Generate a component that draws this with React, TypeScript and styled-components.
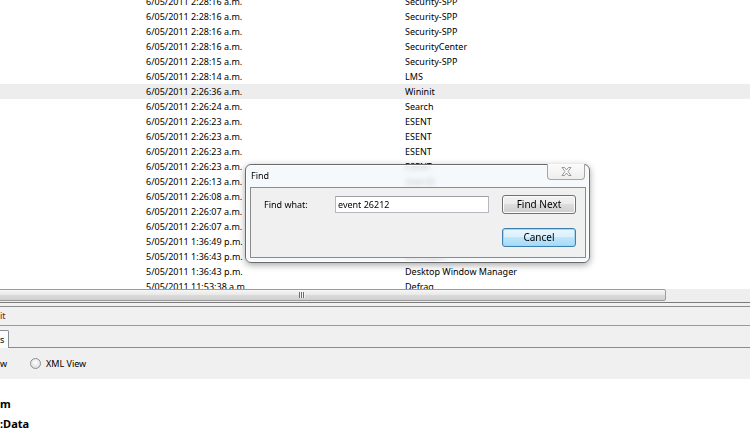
import React from "react";
import styled, { createGlobalStyle } from "styled-components";

// --- 전역 스타일 ---
const GlobalStyle = createGlobalStyle`
  html, body {
    margin: 0;
    padding: 0;
    overflow: hidden;
    background: #fff;
  }
  body {
    font-family: "Noto Sans", "Open Sans", sans-serif;
    font-size: 9px;
    color: #000;
  }
`;

// --- 이벤트 목록 ---
const Page = styled.div`
  position: relative;
  width: 750px;
  height: 429px;
  overflow: hidden;
  display: flex;
  flex-direction: column;
`;

const ListPane = styled.div`
  height: 289px;
  flex: none;
  overflow: hidden;
  background: #fff;
`;

const ListBody = styled.div`
  margin-top: -6px;
`;

const Row = styled.div<{ $selected?: boolean }>`
  display: flex;
  height: 15px;
  line-height: 15px;
  padding-left: 146px;
  background: ${(p) => (p.$selected ? "#ededed" : "transparent")};
  white-space: nowrap;
`;

const DateCell = styled.span`
  width: 259px;
  flex: none;
`;

const SourceCell = styled.span``;

// 가로 스크롤바
const HScroll = styled.div`
  height: 13px;
  flex: none;
  display: flex;
  background: #eeeeee;
`;

const Thumb = styled.div`
  width: 668px;
  margin-left: -2px;
  height: 12px;
  box-sizing: border-box;
  border: 1px solid #9b9b9b;
  border-radius: 2px;
  background: linear-gradient(#f6f6f6 0%, #e9e9e9 45%, #dadada 55%, #d0d0d0 100%);
  display: flex;
  align-items: center;
  justify-content: center;
  padding-right: 60px;
`;

const Grip = styled.div`
  width: 6px;
  height: 6px;
  background: repeating-linear-gradient(
    90deg,
    #6d6d6d 0px,
    #6d6d6d 1px,
    #f4f4f4 1px,
    #f4f4f4 2px
  );
`;

// 분할선 및 하단 패널
const Splitter = styled.div`
  height: 5px;
  flex: none;
  box-sizing: border-box;
  border-top: 1px solid #7c7c7c;
  border-bottom: 1px solid #8c8c8c;
  background: #f0f0f0;
`;

const HeaderBar = styled.div`
  height: 19px;
  flex: none;
  box-sizing: border-box;
  border-bottom: 1px solid #9a9a9a;
  background: #f0f0f0;
  color: #6b1a1a;
  line-height: 18px;
`;

const TabStrip = styled.div`
  height: 22px;
  flex: none;
  display: flex;
  align-items: flex-end;
  background: #f0f0f0;
`;

const Tab = styled.div`
  width: 9px;
  height: 18px;
  box-sizing: border-box;
  border-right: 1px solid #898c95;
  border-top: 1px solid #898c95;
  border-top-right-radius: 2px;
  background: #fcfcfc;
  line-height: 17px;
  overflow: hidden;
`;

const TabFill = styled.div`
  flex: 1;
  height: 1px;
  background: #898c95;
`;

const RadioRow = styled.div`
  height: 31px;
  flex: none;
  display: flex;
  align-items: center;
  background: #f0f0f0;
`;

const RadioLabel = styled.span<{ $w?: number }>`
  width: ${(p) => (p.$w ? `${p.$w}px` : "auto")};
  display: inline-block;
`;

const Radio = styled.span`
  width: 11px;
  height: 11px;
  box-sizing: border-box;
  border-radius: 50%;
  border: 1px solid #8f8f8f;
  background: radial-gradient(circle at 50% 40%, #ffffff 0%, #e6e6e6 60%, #cfcfcf 100%);
  margin-right: 5px;
`;

const DetailArea = styled.div`
  flex: 1;
  background: #fff;
  padding-top: 15px;
`;

const BoldLine = styled.div`
  font-weight: 700;
  font-size: 11px;
  line-height: 20px;
`;

// --- 찾기 대화상자 ---
const Dialog = styled.div`
  position: absolute;
  left: 245px;
  top: 164px;
  width: 345px;
  height: 99px;
  box-sizing: border-box;
  border: 1px solid #6a6a6a;
  border-radius: 6px;
  padding: 22px 3px 4px 4px;
  background: rgba(244, 247, 251, 0.78);
  backdrop-filter: blur(2.5px);
  box-shadow: 0 2px 7px rgba(0, 0, 0, 0.35), inset 0 0 0 1px rgba(255, 255, 255, 0.85);
`;

const Title = styled.div`
  position: absolute;
  left: 5px;
  top: 4px;
  line-height: 14px;
`;

const CloseButton = styled.div`
  position: absolute;
  right: 4px;
  top: -1px;
  width: 38px;
  height: 16px;
  box-sizing: border-box;
  border: 1px solid #a6a6a6;
  border-top: none;
  border-radius: 0 0 4px 4px;
  background: linear-gradient(#fbfbfb, #eeeeee);
  display: flex;
  align-items: center;
  justify-content: center;
`;

const Panel = styled.div`
  height: 71px;
  box-sizing: border-box;
  border: 1px solid #8b8b8b;
  background: #f0f0f0;
  padding: 7px 0 0 13px;
  display: grid;
  grid-template-columns: 58px 154px 74px;
  grid-template-rows: 19px 19px;
  column-gap: 13px;
  row-gap: 14px;
  align-items: center;
`;

const FieldLabel = styled.span`
  line-height: 19px;
`;

const TextBox = styled.div`
  height: 17px;
  box-sizing: border-box;
  border: 1px solid #b5b8be;
  border-top-color: #9ea1a7;
  background: #fff;
  padding-left: 2px;
  line-height: 15px;
`;

const Button = styled.div<{ $focused?: boolean }>`
  grid-column: 3;
  height: 19px;
  box-sizing: border-box;
  border: 1px solid ${(p) => (p.$focused ? "#3c7fb1" : "#707070")};
  border-radius: 3px;
  background: ${(p) =>
    p.$focused
      ? "linear-gradient(#eaf6fd 0%, #d9f0fc 50%, #bee6fd 50%, #a7d9f5 100%)"
      : "linear-gradient(#f2f2f2 0%, #ebebeb 50%, #dddddd 50%, #cfcfcf 100%)"};
  box-shadow: inset 0 0 0 1px ${(p) => (p.$focused ? "#9ed8f5" : "#fcfcfc")};
  text-align: center;
  line-height: 17px;
  font-size: 10px;
`;

// 닫기 아이콘 (윤곽선이 있는 X)
function CloseGlyph() {
  return (
    <svg width="11" height="9" viewBox="0 0 11 9">
      <path
        d="M1 0.5 H3.5 L5.5 3 L7.5 0.5 H10 L7 4.5 L10 8.5 H7.5 L5.5 6 L3.5 8.5 H1 L4 4.5 Z"
        fill="#ffffff"
        stroke="#8c8c8c"
        strokeWidth="0.9"
        strokeLinejoin="round"
      />
    </svg>
  );
}

// --- 데이터 ---
const rows: [string, string][] = [
  ["6/05/2011 2:28:16 a.m.", "Security-SPP"],
  ["6/05/2011 2:28:16 a.m.", "Security-SPP"],
  ["6/05/2011 2:28:16 a.m.", "Security-SPP"],
  ["6/05/2011 2:28:16 a.m.", "SecurityCenter"],
  ["6/05/2011 2:28:15 a.m.", "Security-SPP"],
  ["6/05/2011 2:28:14 a.m.", "LMS"],
  ["6/05/2011 2:26:36 a.m.", "Wininit"],
  ["6/05/2011 2:26:24 a.m.", "Search"],
  ["6/05/2011 2:26:23 a.m.", "ESENT"],
  ["6/05/2011 2:26:23 a.m.", "ESENT"],
  ["6/05/2011 2:26:23 a.m.", "ESENT"],
  ["6/05/2011 2:26:23 a.m.", "ESENT"],
  ["6/05/2011 2:26:13 a.m.", "User32"],
  ["6/05/2011 2:26:08 a.m.", "Winlogon"],
  ["6/05/2011 2:26:07 a.m.", "Kernel-General"],
  ["6/05/2011 2:26:07 a.m.", "Kernel-General"],
  ["5/05/2011 1:36:49 p.m.", "Kernel-Power"],
  ["5/05/2011 1:36:43 p.m.", "Winlogon"],
  ["5/05/2011 1:36:43 p.m.", "Desktop Window Manager"],
  ["5/05/2011 11:53:38 a.m.", "Defrag"],
];

export default function App() {
  return (
    <Page>
      <GlobalStyle />
      <ListPane>
        <ListBody>
          {rows.map(([date, source], i) => (
            <Row key={i} $selected={i === 6}>
              <DateCell>{date}</DateCell>
              <SourceCell>{source}</SourceCell>
            </Row>
          ))}
        </ListBody>
      </ListPane>

      <HScroll>
        <Thumb>
          <Grip />
        </Thumb>
      </HScroll>

      <Splitter />
      <HeaderBar>it</HeaderBar>
      <TabStrip>
        <Tab>s</Tab>
        <TabFill />
      </TabStrip>
      <RadioRow>
        <RadioLabel $w={30}>w</RadioLabel>
        <Radio />
        <RadioLabel>XML View</RadioLabel>
      </RadioRow>
      <DetailArea>
        <BoldLine>m</BoldLine>
        <BoldLine>:Data</BoldLine>
      </DetailArea>

      {/* 찾기 대화상자 */}
      <Dialog>
        <Title>Find</Title>
        <CloseButton>
          <CloseGlyph />
        </CloseButton>
        <Panel>
          <FieldLabel>Find what:</FieldLabel>
          <TextBox>event 26212</TextBox>
          <Button>Find Next</Button>
          <Button $focused>Cancel</Button>
        </Panel>
      </Dialog>
    </Page>
  );
}
